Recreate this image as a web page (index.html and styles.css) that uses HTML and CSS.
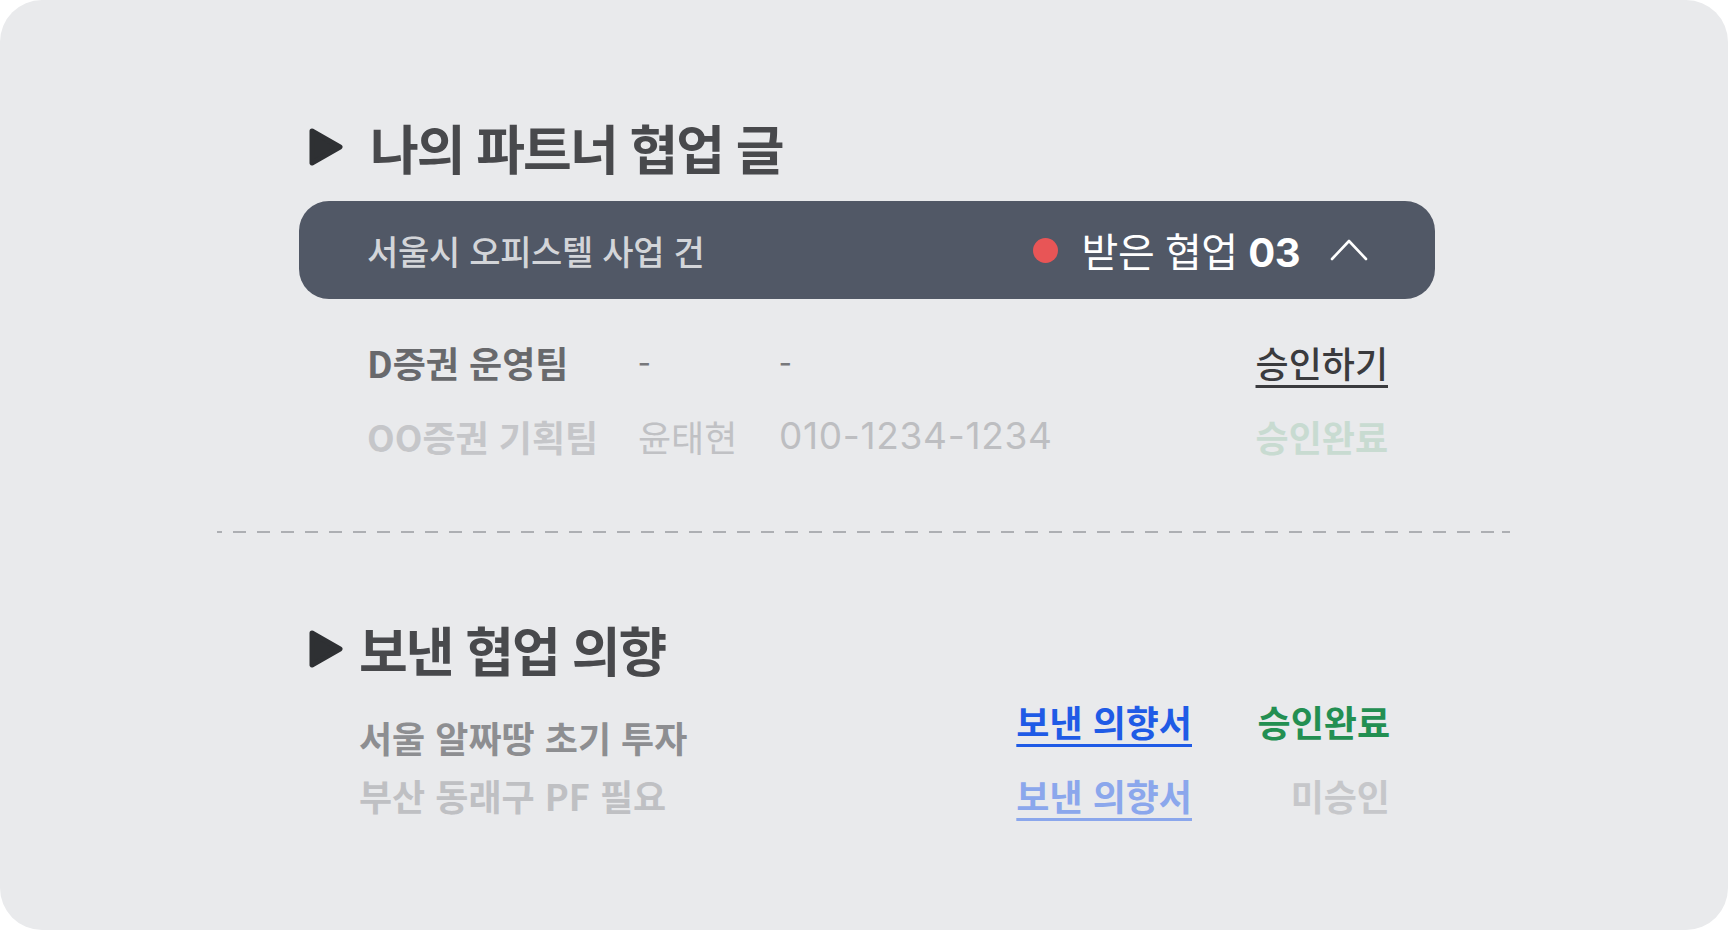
FILE: index.html
```html
<!DOCTYPE html>
<html lang="ko">
<head>
<meta charset="utf-8">
<title>협업</title>
<link rel="stylesheet" href="styles.css">
</head>
<body>
<div class="card">
  <section class="sec sec-partner">
    <h2 class="title title-1">
      <svg class="tri" viewBox="0 0 36 40" width="36" height="40"><path d="M4 4 L32 20 L4 36 Z" fill="#2e3033" stroke="#2e3033" stroke-width="5" stroke-linejoin="round"/></svg>
      <span>나의 파트너 협업 글</span>
    </h2>
    <div class="bar">
      <span class="bar-name">서울시 오피스텔 사업 건</span>
      <div class="bar-right">
        <span class="dot"></span>
        <span class="bar-label">받은 협업 <b>03</b></span>
        <svg class="chev" viewBox="0 0 38 24" width="38" height="24"><polyline points="2,21 19,3 36,21" fill="none" stroke="#ffffff" stroke-width="2.6" stroke-linecap="round" stroke-linejoin="round"/></svg>
      </div>
    </div>
    <div class="rows">
      <div class="row row-active">
        <span class="c1">D증권 운영팀</span>
        <span class="c2">-</span>
        <span class="c3">-</span>
        <a class="c4 approve">승인하기</a>
      </div>
      <div class="row row-done">
        <span class="c1">OO증권 기획팀</span>
        <span class="c2">윤태현</span>
        <span class="c3">010-1234-1234</span>
        <span class="c4 done">승인완료</span>
      </div>
    </div>
  </section>

  <div class="divider"></div>

  <section class="sec sec-sent">
    <h2 class="title title-2">
      <svg class="tri" viewBox="0 0 36 40" width="36" height="40"><path d="M4 4 L32 20 L4 36 Z" fill="#2e3033" stroke="#2e3033" stroke-width="5" stroke-linejoin="round"/></svg>
      <span>보낸 협업 의향</span>
    </h2>
    <div class="sent">
      <ul class="sent-list">
        <li class="s1">서울 알짜땅 초기 투자</li>
        <li class="s2">부산 동래구 PF 필요</li>
      </ul>
      <div class="sent-status">
        <a class="letter">보낸 의향서</a>
        <span class="st green">승인완료</span>
        <a class="letter faded">보낸 의향서</a>
        <span class="st gray">미승인</span>
      </div>
    </div>
  </section>
</div>
</body>
</html>
```

FILE: styles.css
```css
* { box-sizing: border-box; }
html, body { margin: 0; padding: 0; background: #ffffff; }
body {
  font-family: "Noto Sans CJK KR", "Noto Sans", sans-serif;
  width: 1728px;
  height: 930px;
  overflow: hidden;
}
.card {
  width: 1728px;
  height: 930px;
  background: #e9eaec;
  border-radius: 42px;
  padding: 115px 218px 0 217px;
}
.sec { margin-left: 82px; width: 1136px; }

.title {
  margin: 0;
  display: flex;
  align-items: center;
  height: 64px;
  padding-left: 9px;
  font-size: 53px;
  line-height: 64px;
  font-weight: 700;
  color: #48494c;
  letter-spacing: -2px;
}
.title-1 .tri { margin-right: 26px; }
.title-2 .tri { margin-right: 15px; }
.tri { flex: none; }

.bar {
  margin-top: 22px;
  height: 98px;
  border-radius: 30px;
  background: #515866;
  display: flex;
  align-items: center;
  justify-content: space-between;
  padding: 0 67px 0 68px;
}
.bar-name {
  font-size: 34px;
  font-weight: 500;
  color: #d3d5d9;
  letter-spacing: -0.3px;
}
.bar-right { display: flex; align-items: center; }
.dot {
  width: 25px; height: 25px; border-radius: 50%;
  background: #e85556;
  margin-right: 24px;
}
.bar-label {
  font-size: 40px;
  color: #ffffff;
  font-weight: 400;
  letter-spacing: -0.5px;
}
.bar-label b { font-family: "Inter", "Noto Sans", sans-serif; font-weight: 700; }
.chev { margin-left: 30px; }

.rows { margin-top: 41px; padding: 0 47px 0 68px; }
.row {
  display: flex;
  align-items: center;
  height: 44px;
  font-size: 36px;
  line-height: 44px;
}
.row + .row { margin-top: 30px; }
.c1 { width: 271px; font-weight: 600; }
.c2 { width: 141px; }
.c3 { flex: 1; }
.c4 { text-align: right; font-weight: 500; }
.row-active .c1 { color: #68696c; }
.row-active .c2, .row-active .c3 { color: #77787b; }
.approve {
  color: #3a3b3e;
  text-decoration: underline;
  text-decoration-thickness: 3px;
  text-underline-offset: 7px;
}
.row-done .c1 { color: #c5c6c9; }
.row-done .c2 { color: #c0c1c4; font-weight: 400; }
.row-done .c3 {
  color: #bdbec1;
  font-weight: 400;
  font-size: 37px;
  letter-spacing: 0.7px;
  font-family: "Inter", "Noto Sans", sans-serif;
}
.done { color: #c8dbd1; font-weight: 600; }

.divider {
  margin-top: 73px;
  height: 2px;
  background: repeating-linear-gradient(90deg, #adafb3 0 13px, transparent 13px 24px);
  background-position: -8px 0;
}

.sec-sent { margin-top: 84px; }
.sent { display: flex; }
.sent-list {
  list-style: none;
  margin: 27px 0 0 0;
  padding: 0 0 0 60px;
  flex: 1;
}
.sent-list li {
  font-size: 36px;
  line-height: 58px;
  font-weight: 600;
}
.s1 { color: #8d8e91; }
.s2 { color: #bfc0c3; }
.sent-status {
  margin-top: 18px;
  margin-right: 45px;
  display: grid;
  grid-template-columns: auto 198px;
  row-gap: 30px;
  align-content: start;
}
.letter, .st {
  font-size: 36px;
  line-height: 44px;
  font-weight: 600;
}
.letter {
  color: #1f5be6;
  text-decoration: underline;
  text-decoration-thickness: 3px;
  text-underline-offset: 7px;
}
.letter.faded { color: #8ba7ec; }
.st { text-align: right; }
.green { color: #238f52; }
.gray { color: #c6c7ca; }
```
